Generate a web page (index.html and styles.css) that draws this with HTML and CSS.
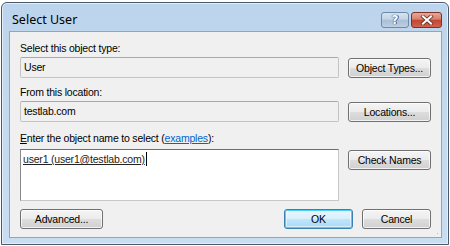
FILE: index.html
```html
<!DOCTYPE html>
<html>
<head>
<meta charset="utf-8">
<link rel="stylesheet" href="styles.css">
</head>
<body>
<div class="window">
  <div class="titlebar">
    <span class="title">Select User</span>
    <div class="caption-buttons">
      <div class="cap-btn help"><span>?</span></div>
      <div class="cap-btn close">
        <svg width="14" height="10" viewBox="0 0 14 10"><path d="M3 1.5 L11 8.5 M11 1.5 L3 8.5" stroke="#5a2018" stroke-width="3.6" stroke-linecap="square"/><path d="M3 1.5 L11 8.5 M11 1.5 L3 8.5" stroke="#ffffff" stroke-width="2.2" stroke-linecap="square"/></svg>
      </div>
    </div>
  </div>
  <div class="client">
    <div class="label l1">Select this object type:</div>
    <div class="row">
      <div class="field">User</div>
      <div class="btn">Object Types...</div>
    </div>
    <div class="label l2">From this location:</div>
    <div class="row">
      <div class="field">testlab.com</div>
      <div class="btn">Locations...</div>
    </div>
    <div class="label l3"><u>E</u>nter the object name to select (<a class="link">examples</a>):</div>
    <div class="row top">
      <div class="textarea"><span class="entry">user1 (user1@testlab.com)</span><span class="caret"></span></div>
      <div class="btn">Check Names</div>
    </div>
    <div class="bottom">
      <div class="btn">Advanced...</div>
      <div class="spacer"></div>
      <div class="btn default">OK</div>
      <div class="btn">Cancel</div>
    </div>
    <div class="grip"></div>
  </div>
</div>
</body>
</html>
```

FILE: styles.css
```css
html, body {
  margin: 0;
  padding: 0;
  background: #ffffff;
}
body {
  width: 450px;
  height: 246px;
  overflow: hidden;
  font-family: "Liberation Sans", Arial, sans-serif;
  font-size: 10.5px;
  letter-spacing: -0.2px;
  color: #000;
}
.window {
  margin: 2px 1px 0 1px;
  border: 1px solid #4a5a6a;
  border-radius: 6px 6px 0 0;
  background: linear-gradient(to bottom, #bcd4ec 0%, #c3d9ee 40%, #c8ddf1 100%);
  box-shadow: inset 0 0 0 1px #e4eef8;
  display: flex;
  flex-direction: column;
  padding: 0 6px 6px 7px;
  box-sizing: border-box;
  width: 448px;
  height: 243px;
}
.titlebar {
  height: 28px;
  display: flex;
  align-items: center;
  justify-content: space-between;
  flex: none;
}
.title {
  font-family: "Noto Sans", sans-serif;
  font-size: 12.5px;
  letter-spacing: 0;
  color: #000;
  padding-left: 3px;
  padding-top: 4px;
}
.caption-buttons {
  display: flex;
  gap: 2px;
  align-self: flex-start;
  margin-top: 9px;
}
.cap-btn {
  height: 16px;
  border-radius: 3px;
  display: flex;
  align-items: center;
  justify-content: center;
  box-sizing: border-box;
}
.help {
  width: 28px;
  border: 1px solid #6e8aa6;
  background: linear-gradient(to bottom, #d6e3ef 0%, #c4d4e4 45%, #a9bfd6 50%, #bccfe2 100%);
}
.help span {
  font-family: "DejaVu Sans", sans-serif;
  font-weight: bold;
  font-size: 12px;
  color: #fff;
  line-height: 12px;
  text-shadow: 0 0 1px #3c4e62, 0 0 1px #3c4e62, 1px 0 0 #50627a;
}
.close {
  width: 31px;
  border: 1px solid #7a3328;
  background: linear-gradient(to bottom, #e8a797 0%, #d9806c 45%, #c24630 50%, #d0624c 100%);
}
.client {
  flex: 1;
  background: #f0f0f0;
  border: 1px solid #8ea6be;
  padding: 0 10px 0 10px;
  position: relative;
  display: flex;
  flex-direction: column;
}
.label {
  line-height: 16px;
  height: 16px;
  white-space: nowrap;
}
.l1 { margin-top: 8px; }
.l2 { margin-top: 6px; }
.l3 { margin-top: 8px; }
.link {
  color: #0066cc;
  text-decoration: underline;
}
.row {
  display: flex;
  align-items: center;
  gap: 9px;
  margin-top: 1px;
}
.row.top {
  align-items: flex-start;
  margin-top: 3px;
}
.field {
  width: 320px;
  height: 21px;
  box-sizing: border-box;
  border: 1px solid #c4c4c4;
  border-top-color: #a9a9a9;
  background: #f0f0f0;
  padding-left: 3px;
  line-height: 19px;
  border-radius: 2px;
}
.textarea {
  width: 320px;
  height: 52px;
  box-sizing: border-box;
  border: 1px solid #c8c8c8;
  border-top-color: #6e6e6e;
  border-left-color: #8a8a8a;
  background: #ffffff;
  padding: 1px 2px;
  line-height: 16px;
  white-space: nowrap;
}
.entry {
  text-decoration: underline;
  color: #222;
}
.caret {
  display: inline-block;
  width: 1px;
  height: 14px;
  background: #000;
  vertical-align: -3px;
  margin-left: 1px;
}
.btn {
  width: 83px;
  height: 20px;
  box-sizing: border-box;
  border: 1px solid #707070;
  border-radius: 3px;
  background: linear-gradient(to bottom, #f4f4f4 0%, #ececec 48%, #dddddd 52%, #d0d0d0 100%);
  box-shadow: inset 0 0 0 1px rgba(255,255,255,0.7);
  display: flex;
  align-items: center;
  justify-content: center;
  line-height: 16px;
  white-space: nowrap;
  flex: none;
}
.row .btn { margin-top: 1px; }
.bottom {
  display: flex;
  gap: 9px;
  margin-top: 8px;
}
.spacer { flex: 1; }
.bottom .btn.default, .bottom .btn:last-child { width: 69px; }
.btn.default {
  border-color: #3c7fb1;
  background: linear-gradient(to bottom, #eaf6fd 0%, #d9f0fc 48%, #bee6fd 52%, #a7d9f5 100%);
  box-shadow: inset 0 0 0 1px #48d2fa, inset 0 0 0 2px rgba(255,255,255,0.5);
}
.grip {
  position: absolute;
  right: 1px;
  bottom: 1px;
  width: 7px;
  height: 7px;
  background:
    radial-gradient(circle, #b5b5b5 0.8px, transparent 1px) 0 0 / 3px 3px;
  clip-path: polygon(100% 0, 100% 100%, 0 100%);
}
```
